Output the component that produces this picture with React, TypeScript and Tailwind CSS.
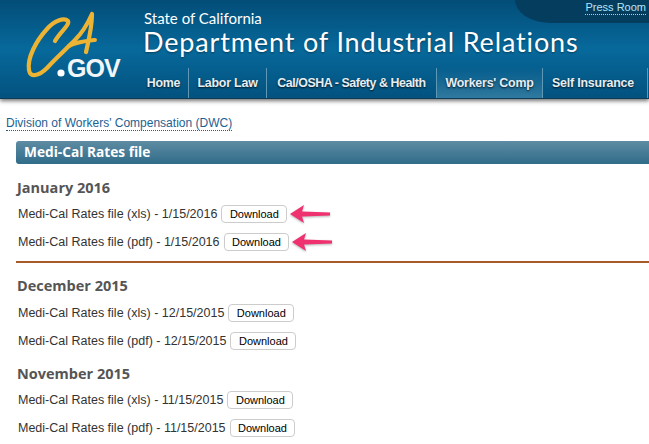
const navItems = [
  { label: "Home", cell: "w-[46px] pr-[4px]" },
  { label: "Labor Law", cell: "w-[78px]" },
  { label: "Cal/OSHA - Safety & Health", cell: "w-[170px] tracking-[-0.45px]" },
  { label: "Workers' Comp", cell: "w-[106px] bg-gradient-to-t from-[#2f7aa0] to-transparent" },
  { label: "Self Insurance", cell: "w-[105px] pr-[4px]" },
]

const sections = [
  { month: "January 2016", date: "1/15/2016", arrows: true, box: "mt-[15px] border-b-2 border-[#a85a28] pb-[5px]", gap: "mt-[3px]" },
  { month: "December 2015", date: "12/15/2015", arrows: false, box: "mt-[14px]", gap: "mt-[4px]" },
  { month: "November 2015", date: "11/15/2015", arrows: false, box: "mt-[10px]", gap: "mt-[3px]" },
]

function Logo() {
  return (
    <svg width="105" height="76" viewBox="0 0 105 76" className="shrink-0" aria-hidden="true">
      <path
        d="M35 33 C40 24 50 17 48 13 C44 9 34 13 27 21 C16 33 7 50 9 62 C10 70 19 68 27 60 C34 52 45 42 55 32 C62 25 68 15 72 6 C72 20 68 35 66 44"
        fill="none"
        stroke="#edb333"
        strokeWidth="4.2"
        strokeLinecap="round"
        strokeLinejoin="round"
      />
      <path d="M49 38 C56 34 66 33 75 32" fill="none" stroke="#edb333" strokeWidth="4" strokeLinecap="round" />
      <circle cx="41" cy="65" r="3.6" fill="#fff" />
      <text x="47" y="69" fontFamily="'Liberation Sans', sans-serif" fontWeight="700" fontSize="25" fill="#f2f6f8" letterSpacing="-1">
        GOV
      </text>
    </svg>
  )
}

function Arrow() {
  return (
    <svg width="40" height="18" viewBox="0 0 40 18" className="ml-[3px] shrink-0 drop-shadow-[0_1px_1px_rgba(0,0,0,0.3)]" aria-hidden="true">
      <path d="M0 9 L14 0 L12 6.5 L40 7.5 L40 10.5 L12 11.5 L14 18 Z" fill="#f0316f" />
    </svg>
  )
}

function FileRow({ kind, date, arrow }: { kind: string; date: string; arrow: boolean }) {
  return (
    <div className="flex h-[28px] items-center pl-[18px] text-[12.5px] text-[#333]">
      <span>Medi-Cal Rates file ({kind}) - {date}</span>
      <button className="ml-[4px] h-[18px] rounded-[4px] border border-[#ccc] bg-white px-[7.5px] text-[11px] leading-none text-black">
        Download
      </button>
      {arrow && <Arrow />}
    </div>
  )
}

export default function App() {
  return (
    <div className="h-[444px] w-[649px] overflow-hidden bg-white font-['Liberation_Sans',sans-serif]">
      {/* Header */}
      <header className="relative h-[99px] border-b border-[#0c3a57] bg-gradient-to-b from-[#034d78] via-[#07699b] to-[#03527f] shadow-[0_2px_4px_rgba(0,0,0,0.55)]">
        <div className="absolute right-0 top-0 flex h-[23px] w-[134px] justify-end rounded-bl-[36px_23px] bg-[#053d5f] pr-[3px]">
          <a className="h-[15px] border-b border-dotted border-[#9fd3ee] text-[11px] leading-[15px] font-medium text-[#b5e4f8]">Press Room</a>
        </div>
        <div className="flex h-full">
          <div className="ml-[20px] mt-[8px]">
            <Logo />
          </div>
          <div className="ml-[18px] flex min-w-0 flex-col">
            <p className="mt-[9px] pl-px font-['Lato',sans-serif] text-[15px] leading-[18px] text-white">State of California</p>
            <h1 className="font-['Lato',sans-serif] text-[27px] leading-[30px] tracking-[0.85px] whitespace-nowrap text-white [text-shadow:0_1px_2px_rgba(0,0,0,0.4)]">
              Department of Industrial Relations
            </h1>
            <nav className="mt-[11px] flex h-[30px]">
              {navItems.map((item) => (
                <div
                  key={item.label}
                  className={`${item.cell} flex shrink-0 items-center justify-center whitespace-nowrap border-r border-[#5f97b6] text-[12.4px] font-bold tracking-[-0.2px] text-[#e6eef3] [text-shadow:0_1px_2px_rgba(0,0,0,0.8)]`}
                >
                  {item.label}
                </div>
              ))}
            </nav>
          </div>
        </div>
      </header>

      {/* Breadcrumb */}
      <div className="mt-[17px] h-[15px] pl-[6px] text-[12px] leading-[15px] text-[#1c6192]">
        <a className="border-b border-dotted border-[#1c6192]">Division of Workers' Compensation (DWC)</a>
      </div>

      <main className="mt-[10px] pl-[16px]">
        <h2 className="flex h-[23px] items-center rounded-l-[3px] bg-gradient-to-b from-[#5e8ca3] to-[#2f6c89] pl-[8px] font-['Open_Sans',sans-serif] text-[13.7px] font-bold text-white">
          Medi-Cal Rates file
        </h2>

        {sections.map((section) => (
          <section key={section.month} className={section.box}>
            <h3 className="h-[18px] pl-px font-['Open_Sans',sans-serif] text-[14.5px] leading-[18px] font-bold text-[#555]">
              {section.month}
            </h3>
            <div className={`-ml-[16px] ${section.gap}`}>
              <FileRow kind="xls" date={section.date} arrow={section.arrows} />
              <FileRow kind="pdf" date={section.date} arrow={section.arrows} />
            </div>
          </section>
        ))}
      </main>
    </div>
  )
}
